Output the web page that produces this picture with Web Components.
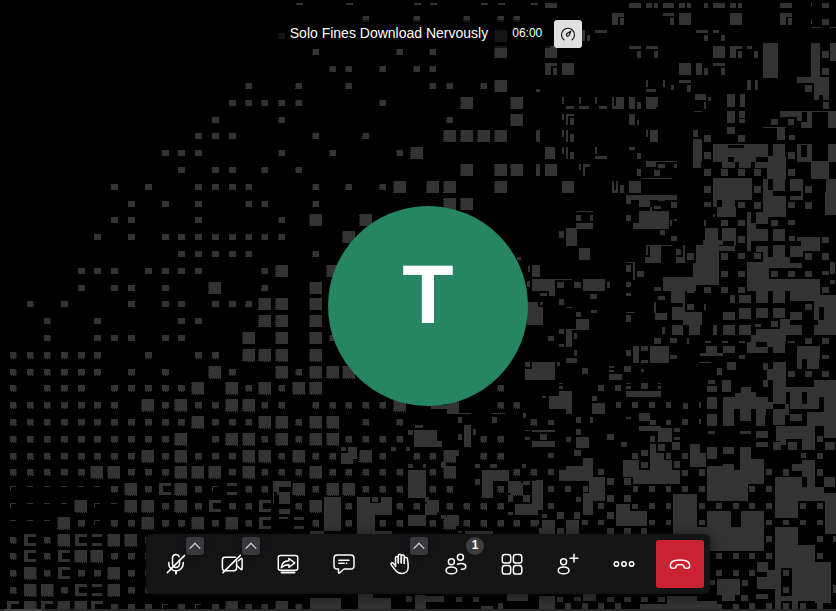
<!DOCTYPE html>
<html lang="en">
<head>
<meta charset="utf-8">
<meta name="viewport" content="width=device-width, initial-scale=1">
<title>Solo Fines Download Nervously</title>
<style>
  html, body {
    height: 100%;
    margin: 0;
    background: #000;
    font-family: "Liberation Sans", Arial, sans-serif;
  }
</style>
</head>
<body>
<meeting-room>
  <pixel-backdrop slot="backdrop"></pixel-backdrop>
  <meeting-subject slot="subject" time="06:00">Solo Fines Download Nervously</meeting-subject>
  <user-avatar slot="speaker" color="#268663">T</user-avatar>
  <meeting-toolbar slot="toolbar">
    <toolbar-button icon="mic" label="Unmute microphone" menu="Audio settings"></toolbar-button>
    <toolbar-button icon="camera" label="Start camera" menu="Video settings"></toolbar-button>
    <toolbar-button icon="share" label="Share your screen"></toolbar-button>
    <toolbar-button icon="chat" label="Open chat"></toolbar-button>
    <toolbar-button icon="hand" label="Raise your hand" menu="Reactions"></toolbar-button>
    <toolbar-button icon="people" label="Participants">1</toolbar-button>
    <toolbar-button icon="tiles" label="Toggle tile view"></toolbar-button>
    <toolbar-button icon="invite" label="Invite people"></toolbar-button>
    <toolbar-button icon="more" label="More actions"></toolbar-button>
    <toolbar-button icon="hangup" label="Leave the meeting" danger></toolbar-button>
  </meeting-toolbar>
</meeting-room>

<template id="room-template">
  <style>
    :host {
      display: block;
      position: relative;
      min-height: 100%;
      overflow: hidden;
      background: #000;
    }
    .backdrop {
      position: absolute;
      inset: 0;
    }
    .stage {
      position: relative;
      box-sizing: border-box;
      min-height: 100vh;
      display: grid;
      grid-template-rows: 1fr auto 1fr;
      justify-items: center;
      padding: 17px 0 17px 20px;
    }
    .top {
      align-self: start;
      padding-top: 3px;
    }
    .bottom { align-self: end; }
    .strip {
      position: absolute;
      left: 0;
      right: 0;
      bottom: 0;
      height: 2px;
      background: linear-gradient(90deg, #292929 4px, #444 4px 42px, #292929 42px);
    }
  </style>
  <div class="backdrop"><slot name="backdrop"></slot></div>
  <main class="stage">
    <div class="top"><slot name="subject"></slot></div>
    <slot name="speaker"></slot>
    <div class="bottom"><slot name="toolbar"></slot></div>
  </main>
  <div class="strip"></div>
</template>

<template id="subject-template">
  <style>
    :host {
      display: flex;
      align-items: center;
      height: 28px;
      color: #fff;
    }
    .title, .timer {
      box-sizing: border-box;
      height: 28px;
      background: rgba(0, 0, 0, 0.6);
    }
    .title {
      margin: 0;
      padding: 0 16px;
      font-size: 14px;
      font-weight: 400;
      line-height: 26px;
      border-radius: 3px 0 0 3px;
      white-space: nowrap;
    }
    .timer {
      padding: 0 8px;
      margin-right: 4px;
      font-size: 12px;
      line-height: 26px;
    }
    button {
      display: flex;
      align-items: center;
      justify-content: center;
      width: 28px;
      height: 28px;
      padding: 0;
      border: 0;
      border-radius: 3px;
      background: #e0e0e0;
      color: #111;
      cursor: pointer;
    }
    svg {
      width: 16px;
      height: 16px;
    }
  </style>
  <h1 class="title"><slot></slot></h1>
  <time class="timer"></time>
  <button type="button" aria-label="Performance settings">
    <svg viewBox="0 0 16 16" fill="none" stroke="currentColor" stroke-width="1.2" stroke-linecap="round">
      <path d="M3.9 13.8A6.5 6.5 0 1 1 12.1 13.8"/>
      <path d="M10.9 5.3 7 7.6a1.4 1.4 0 1 0 2 1.9z" stroke-linejoin="round"/>
    </svg>
  </button>
</template>

<template id="avatar-template">
  <style>
    :host {
      display: flex;
      align-items: center;
      justify-content: center;
      box-sizing: border-box;
      width: 200px;
      height: 200px;
      padding-bottom: 24px;
      border-radius: 50%;
      color: #fff;
      font-size: 84px;
      font-weight: 700;
      line-height: 96px;
    }
  </style>
  <slot></slot>
</template>

<template id="toolbar-template">
  <style>
    :host {
      display: flex;
      gap: 8px;
      padding: 6px;
      border-radius: 6px;
      background: #141414;
      box-shadow: 0 2px 8px 4px rgba(0, 0, 0, 0.3);
    }
  </style>
  <slot></slot>
</template>

<template id="button-template">
  <style>
    :host {
      display: block;
      position: relative;
    }
    button {
      display: flex;
      align-items: center;
      justify-content: center;
      padding: 0;
      border: 0;
      border-radius: 3px;
      background: transparent;
      color: #fff;
      cursor: pointer;
    }
    .main {
      width: 48px;
      height: 48px;
    }
    .main:hover { background: #292929; }
    :host([danger]) .main { background: #cb2233; }
    .main svg {
      width: 24px;
      height: 24px;
    }
    .menu, .badge {
      position: absolute;
      top: -3px;
      right: -4px;
      width: 18px;
      height: 18px;
    }
    .menu {
      background: #36383c;
      box-shadow: 0 1px 4px rgba(0, 0, 0, 0.4);
    }
    .menu svg {
      width: 12px;
      height: 12px;
    }
    .badge {
      border-radius: 50%;
      background: #3d3d3d;
      color: #fff;
      font-size: 12px;
      font-weight: 700;
      line-height: 17px;
      text-align: center;
      pointer-events: none;
    }
    [hidden] { display: none; }
  </style>
  <button class="main" type="button">
    <svg viewBox="0 0 24 24" fill="none" stroke="currentColor" stroke-width="1.5" stroke-linecap="round" stroke-linejoin="round"></svg>
  </button>
  <button class="menu" type="button" hidden>
    <svg viewBox="0 0 12 12" fill="none" stroke="#c8c8c8" stroke-width="1.3"><path d="M.7 8.7 6 3.3l5.3 5.4"/></svg>
  </button>
  <span class="badge" hidden><slot></slot></span>
</template>

<script>
const ICONS = {
  mic: `<path d="M15.5 8v4a3.5 3.500 0 0 1-7 0V6a3.500 3.500 0 0 1 6.700-1.400"/>
    <path d="M4.800 10.500v1.200a7.200 7.200 0 0 0 14.400 0v-1.200"/><path d="M12 19v2.600" stroke-width="2"/>
    <path d="M3.400 20.600 20.600 3.400"/>`,
  camera: `<path d="M15.500 5.300H5a2.600 2.600 0 0 0-2.600 2.600v8.200A2.600 2.600 0 0 0 5 18.700h9a2.600 2.600 0 0 0 2.600-2.600V9"/>
    <path d="m16.600 13.500 4.400 3.900c.5.400 1.100.200 1.100-.5V7c0-.7-.6-.9-1.100-.5l-2.600 2.200"/><path d="M3 20.600 20.300 3.400"/>`,
  share: `<rect x="2.300" y="3.600" width="19.400" height="14.700" rx="2"/>
    <path d="M5.500 20.600h13" stroke-width="2"/>
    <path d="M5.300 15.800c.3-4.200 3-6.900 7.600-7V6.500l5.900 4.400-5.900 4.400v-2.600c-3.400-.1-5.500.8-7.600 3.100z"/>`,
  chat: `<path d="M5.300 3h13.400A3.300 3.300 0 0 1 22 6.300v7.400a3.300 3.300 0 0 1-3.300 3.300H12l-4.500 4c-.5.4-1 .2-1-.5V17H5.300A3.300 3.300 0 0 1 2 13.700V6.300A3.300 3.300 0 0 1 5.300 3z"/>
    <path d="M6.800 8.200H17M6.800 11.300h5.400M14.300 11.300h.5"/>`,
  hand: `<path d="M7.500 14.500V5.800a1.400 1.400 0 0 1 2.800 0V11"/>
    <path d="M10.300 11V3.800a1.500 1.500 0 0 1 3 0V11"/>
    <path d="M13.300 11V4.600a1.500 1.500 0 0 1 3 0v6.900"/>
    <path d="M16.300 11.500V6.800a1.500 1.500 0 0 1 3-.1c.5 2.300.9 5.300.9 8.300 0 4-2.700 6.500-6.500 6.500-2.900 0-4.800-1.200-6.200-3.100l-4.300-5.600c-.9-1.200.8-2.700 2-1.600l2.300 2.300"/>`,
  people: `<circle cx="7.400" cy="9.700" r="3"/><ellipse cx="7.400" cy="18.400" rx="5.400" ry="3.400"/>
    <circle cx="16.400" cy="5.300" r="3"/><path d="M13.500 12.200c3.700-1.500 8.300-.3 8.300 2.200 0 1.700-1.800 2.800-4.300 2.900"/>`,
  tiles: `<rect x="2.300" y="2.600" width="8.400" height="8.400" rx="2.600"/><rect x="13.400" y="2.600" width="8.400" height="8.400" rx="2.600"/>
    <rect x="2.300" y="13.600" width="8.400" height="8.400" rx="2.600"/><rect x="13.400" y="13.600" width="8.400" height="8.400" rx="2.600"/>`,
  invite: `<circle cx="7.600" cy="9.700" r="3"/><ellipse cx="7.600" cy="18.400" rx="5.400" ry="3.400"/>
    <path d="M18 2.300v7.800M14.100 6.200h7.800"/>`,
  more: `<circle cx="4.400" cy="12" r="2.200"/><circle cx="12" cy="12" r="2.200"/><circle cx="19.600" cy="12" r="2.200"/>`,
  hangup: `<path d="M2.300 13.400C2.300 9.700 6.300 8 12 8s9.700 1.700 9.700 5.400c0 1.700-.6 2.900-2 2.800l-2.600-.3c-1.200-.2-1.400-1-1.500-2.500-1.100-.6-2.200-.8-3.600-.8s-2.500.2-3.600.8c-.1 1.500-.3 2.300-1.500 2.500l-2.600.3c-1.400.1-2-1.100-2-2.800z"/>`,
};

// One character per cell, 16.8px pitch. s: dot, B: block, h: cut-off dot,
// t: dash, l: corner, C: bracket, e: two bars.
const CELLS = [
  '.................h..h...hh..hh.h',
  '.....................s..s..s.ss.',
  '................s............B..',
  '..................s....s.s...B..',
  '...................ss.s.ss......',
  '..............s..s..s....ss.sB..',
  '.............sssss....s....B..B.',
  '............s...s.........s...B.',
  '...........sss....s..s....BBBB..',
  '.........sss....s..s...sB.......',
  '..........s.ss.s.s.........B.BB.',
  '......s.s..ssss...s.s.sB.BB..B..',
  '.......s.s.s..ss..s.......BB....',
  '......ss...s....s.B..B..........',
  '.....s.s.ssssssss...B...........',
  '..........sssss...s.............',
  '....sss.ssss...sB..B............',
  '....s.ss.s..B..s..B.............',
  '.s.s...s.ss.sssBB.B.............',
  '..s..s....ss...BB.B.............',
  '..s..sss.ss...B.B.Bs............',
  'ssssss..s..ss.BBB.B.............',
  'ssssss.s.s..Bs..BsBBB...........',
  's.sss.sssssB.BsBsBB..........s..',
  'sssssss.BsBssBBss.sssssB.....ss.',
  'sssssssssssBsssBBsBB.s.s.......s',
  'ssssssssssB.sBBsBsBBssss....ss..',
  'ssssssssBsBsssBBsBss.Bs.ssB.ss..',
  'sssssBBsssBBBsBsssBsssss.sB...ss',
  'ltttttsBsCBslesseBsBBsss.ss..sB.',
  'ltttBltBBsBsCssC.sB.s..ssBssss..',
  'tttBslssBssBsBsC.es.s.ss.sBsssss',
  'sCsBCeBBs.......................',
  'sCsCBBsss.......................',
  'sBsCssBss.......................',
  'sBBsCeBss.......................',
  'CBCBBCssslslsBssBssB..s.........',
];

const SHAPES = {
  s: '-9 -9 9 9', B: '-18 -18 18 18', h: '-9 3 12 9', t: '-9 -8 9 -5',
  l: '-9 -9 9 -6 -9 -9 -6 6', C: '-18 -18 18 -9 -18 -9 -6 9 -18 9 18 18',
  e: '-14 -18 14 -8 -14 8 14 18',
};

// Merged areas. Each list is x0 y0 x1 y1 in thirds of a pixel from its origin.
const AREAS = [
  [536, 0, `27 10 63 23 279 10 315 23 330 10 348 23 354 10 366 23 381 10 414 23 429 10 447 23 453 10 465 23 504 10 516 23
    531 10 567 23 582 10 600 23 606 10 618 23 732 10 768 23 825 10 828 20 858 10 879 23
    228 39 264 50 228 50 246 75 252 55 264 75 381 39 414 48 402 55 414 75 429 39 465 75 582 39 618 75 732 39 768 50
    732 50 750 75 756 55 768 75 825 57 828 72 858 57 879 75 827 81 852 84 878 81 900 84
    138 90 147 122 153 105 162 122 177 90 213 99 480 90 516 99 504 105 516 122 531 90 549 99 555 105 567 122
    27 138 63 174 279 138 315 147 303 152 315 174 330 138 366 147 354 152 366 174 531 138 567 174 582 138 618 147
    582 147 600 174 606 152 618 174 633 138 648 147 654 152 666 174 681 129 726 234 825 129 852 234 882 129 900 183 858 152 879 174
    27 189 63 198 27 198 45 225 51 204 63 225 78 189 114 225 429 189 465 225 480 189 498 225 504 204 516 225
    531 189 567 198 555 204 567 225 858 204 879 225 783 231 879 249 834 249 879 285 834 285 849 300 861 285 879 300 861 306 879 327
    807 255 828 276 0 267 12 276 330 240 336 261 330 267 360 276 381 240 387 261 405 255 414 270 429 240 465 249
    453 255 465 276 633 240 645 270 657 240 666 270 78 291 84 312 90 318 114 327 129 291 135 312 129 318 159 327
    177 291 183 312 189 318 213 327 228 291 234 318 240 291 264 327 228 318 240 327 279 291 297 327 303 306 315 327
    330 291 366 321 330 321 360 327 477 282 510 300 504 306 510 327 516 291 525 303 573 282 597 321 612 282 627 321
    78 342 84 360 90 342 114 348 90 348 97 375 102 354 114 375 279 342 297 375 303 360 309 375 573 333 597 369
    609 333 627 353 609 357 627 369 704 357 725 375 732 333 798 351 783 351 798 363 813 333 828 384 795 366 813 384
    798 333 900 336 756 357 775 375 876 336 900 384 474 333 498 336 0 390 12 426 78 390 84 411 90 390 96 426 102 402 114 426
    330 390 336 411 342 390 366 426 471 390 486 411 504 405 525 426 573 381 597 402 606 405 627 426 681 381 750 384
    723 384 747 420 759 405 777 420 27 441 57 477 78 441 84 462 90 441 96 477 102 456 114 477 177 441 183 462 177 468 213 477
    279 441 297 450 303 459 315 477 471 417 498 486 504 456 525 477 530 432 576 486 576 444 696 471 594 471 660 486
    624 432 696 444 576 432 624 435 696 468 750 534 711 432 747 468 756 456 777 477 783 432 795 486 795 470 828 486 813 432 828 470
    795 432 813 436 876 432 900 486 0 492 12 528 27 492 63 528 129 492 135 510 141 492 162 500 141 500 147 528 303 507 315 528
    330 486 360 501 366 492 387 503 354 510 373 528 327 483 423 486 414 492 423 503 471 486 495 503 504 507 525 528
    558 486 597 503 609 486 645 503 657 486 693 503 555 507 575 528 606 507 627 528 654 507 675 528 693 486 750 537
    756 507 777 528 825 483 879 537 78 543 114 579 228 543 234 575 240 543 246 579 252 555 264 579 279 543 315 579
    504 558 525 579 531 534 648 600 654 558 675 579 681 537 696 600 711 537 747 573 696 573 711 600 762 537 801 573
    795 555 801 600 807 558 828 579 870 537 900 600 321 534 408 537 270 585 423 588 270 588 310 600 342 588 408 600`],
  [536, 190, `78 0 114 9 228 0 246 9 252 0 264 9 279 0 315 9 504 0 525 9 270 15 408 19 270 27 285 42 309 19 342 51
    366 24 387 33 354 48 375 57 405 18 423 30 405 36 423 54 531 0 648 18 531 18 543 50 558 18 597 50 609 18 648 30 543 50 600 81
    504 36 525 52 606 36 627 54 654 36 675 57 681 0 711 66 711 18 750 81 762 18 798 30 795 0 801 18 756 36 777 54
    807 36 828 57 867 6 900 75 120 63 171 67 120 75 135 93 162 75 171 93 120 99 171 117 90 114 123 168 69 123 84 144
    129 174 162 210 270 75 285 93 309 63 399 117 291 99 309 117 342 51 348 63 402 90 408 108 413 87 423 92 531 72 537 81
    555 90 575 108 606 90 627 108 504 90 510 108 633 66 645 183 645 99 660 153 660 66 696 102 660 117 696 153
    705 90 725 108 756 90 777 105 696 66 750 81 372 120 387 135 405 138 423 153 507 114 546 165 501 150 561 165
    558 114 600 153 594 153 600 168 606 138 627 159 711 117 747 153 759 138 777 153 783 141 798 153 795 141 852 183
    858 141 879 159 762 168 801 201 660 168 696 186 711 165 747 201 330 165 408 168 330 168 336 195 342 168 375 219
    327 201 342 219 420 177 435 195 441 165 447 216 420 201 447 219 453 189 474 210 480 165 549 285 471 219 480 261
    549 168 597 183 555 189 575 210 606 189 627 208 654 189 675 208 681 186 696 216 696 201 762 219 807 189 828 210
    858 189 879 210 270 216 297 220 270 225 285 246 291 216 297 270 303 243 324 261 0 225 12 261 381 261 480 303
    405 303 447 339 555 243 575 261 606 243 627 261 633 216 699 303 699 219 798 234 705 243 725 261 756 243 777 261
    807 243 828 261 858 243 879 255 882 216 897 252 882 270 897 282 699 267 852 303 0 267 57 303 39 303 57 318
    57 267 108 270 63 276 84 294 114 276 135 294 141 267 207 303 213 276 222 294 270 276 285 291 354 291 375 303
    453 291 474 309 504 291 525 309 555 291 575 309 606 291 627 309 858 291 879 309 12 309 33 318 69 327 84 345
    162 312 183 327 270 309 285 318 366 318 387 330 582 315 597 339 609 315 645 339 660 303 696 339 711 303 747 339
    762 303 834 333 834 303 852 315 834 315 900 351 0 351 21 405 0 336 6 351 12 336 21 345 90 351 108 354 120 366 135 381
    165 360 183 369 120 387 159 420 270 366 297 370 270 375 285 396 354 336 360 369 357 369 393 390 453 342 474 360
    504 342 510 360 408 351 441 390 441 366 498 405 441 339 447 366 561 366 597 390 609 354 645 387 660 354 696 384
    711 354 747 384 762 366 798 390 807 342 828 360 834 351 849 390 864 351 900 435 846 390 864 405 834 405 864 435
    408 405 441 435 459 405 492 435 531 405 543 435 561 405 597 435 609 405 645 435 657 402 675 411 705 393 725 411
    732 387 762 417 762 405 798 417 660 417 798 435 645 435 750 456 36 438 54 453 69 417 84 432 90 417 108 471 108 417 123 420
    114 429 123 447 69 462 84 471 354 444 375 462 402 444 423 459 453 444 459 462 378 411 387 432 507 453 525 460
    558 453 575 460 609 453 627 460 633 456 660 489 660 471 696 489 693 456 747 471 711 471 747 489 756 453 777 460
    807 444 828 462 858 444 879 462 270 480 285 498 291 468 309 519 315 468 336 482 342 468 399 519 402 495 423 507
    510 468 543 489 561 468 597 489 492 489 561 498 609 495 627 508 783 468 852 507 783 507 798 537 813 507 849 537
    858 495 879 508 90 504 123 519 114 480 123 498 0 516 57 570 63 516 72 528 138 534 156 552 219 528 234 533
    219 540 234 546 219 552 258 570 264 528 285 546 315 510 336 519 315 537 324 546 489 516 525 520 543 534 558 555
    573 516 600 540 681 519 696 540 711 516 750 570 693 537 711 570 756 543 777 561 807 543 828 561 858 543 879 561`],
  [536, 380, `69 9 82 13 69 18 82 27 186 15 204 33 237 15 255 33 270 9 285 12 270 18 285 27 366 9 375 12 366 18 375 27
    270 33 375 51 315 9 336 27 39 48 108 87 69 33 108 48 90 87 108 102 168 48 183 63 168 69 207 102
    240 66 255 84 288 66 306 84 339 66 357 84 390 66 405 84 441 69 456 87 489 66 495 84 516 0 537 12 513 18 543 36
    558 0 585 36 513 51 543 87 561 51 696 87 615 21 645 51 597 39 615 51 645 36 660 51 612 87 645 123 660 87 690 105 660 105 687 138
    693 66 711 87 681 0 696 21 693 0 711 0 711 0 750 72 750 21 846 36 762 36 798 72 813 36 834 51 834 0 900 51 864 51 900 150
    813 51 849 87 711 87 747 135 747 72 760 105 762 102 798 123 762 72 813 87 813 95 864 138 747 138 837 177
    720 138 747 183 864 150 900 174 798 177 837 210 36 120 54 135 120 111 135 129 162 111 171 129 270 111 285 117
    309 99 342 123 342 120 360 135 309 138 375 153 366 144 408 186 390 120 405 135 438 117 456 135 489 117 495 132
    513 102 543 138 561 87 594 138 612 153 645 162 516 153 537 162 660 153 696 174 0 150 57 156 12 162 33 180
    0 183 57 201 90 171 105 186 120 171 159 204 120 147 135 165 213 162 234 180 342 168 357 186 366 192 387 213
    408 186 432 210 414 144 432 156 414 171 432 180 255 186 273 201 462 192 492 261 492 219 510 261 513 201 543 237
    561 201 594 221 612 201 645 270 660 186 696 201 711 186 735 210 735 174 750 195 756 186 783 210 843 168 861 186
    867 186 897 210 36 219 54 234 114 210 135 228 186 267 204 285 288 219 306 237 315 210 336 228 342 192 360 270
    360 219 384 270 390 219 405 237 438 219 456 237 795 219 810 234 843 219 861 237 141 234 171 303 69 270 141 303
    90 258 141 270 261 240 309 291 291 270 432 312 315 246 336 264 384 240 408 270 414 243 432 264 489 267 507 288
    513 258 594 363 561 252 594 258 594 270 684 312 594 312 636 363 645 237 684 270 438 270 456 288 36 267 54 285
    0 267 4 285 690 267 708 285 741 267 759 288 768 252 798 273 798 240 837 291 843 267 861 288 0 300 21 390
    36 318 54 336 87 318 105 336 159 291 207 363 141 318 156 336 141 339 171 405 213 294 234 315 264 294 285 315
    291 318 306 336 339 318 357 336 390 318 405 336 438 318 456 336 489 318 507 336 639 318 657 336 690 318 708 336
    717 291 798 363 717 363 786 414 798 321 864 363 813 291 837 321 864 291 897 321 867 339 900 462 864 339 870 363
    36 369 54 387 120 351 135 366 186 369 204 387 213 345 234 366 264 345 285 366 240 372 282 438 282 393 333 438
    288 372 306 387 339 369 357 387 390 369 405 387 411 343 483 462 489 369 507 387 540 369 558 387 591 369 609 387
    639 369 657 387 690 369 708 387 792 369 810 387 843 369 861 387 63 396 84 417 114 396 132 417 18 402 33 415
    213 396 234 417 18 420 57 462 90 420 129 462 138 420 156 435 186 420 204 435 339 420 357 435 390 420 405 435
    0 420 9 435 489 420 507 435 513 394 585 513 615 394 684 513 585 441 615 513 483 441 513 513 690 420 708 435
    741 420 759 435 792 420 810 435 843 420 861 435 63 444 84 462 213 444 234 462 264 444 285 462 315 444 333 462
    690 468 708 486 717 441 786 564 717 564 735 687 735 648 786 663 768 564 786 687 786 495 837 663 837 546 886 669 741 669 759 687
    792 669 810 687 741 570 759 588 741 621 759 639 843 468 861 486 891 468 900 486
    540 519 558 537 591 519 609 537 639 519 657 537 690 519 708 537 843 519 861 537 540 570 558 588 591 570 609 588
    639 570 657 588 663 546 696 576 693 570 720 627 663 591 717 627 543 597 612 645 618 600 636 618 522 600 537 615
    63 651 81 666 114 651 135 663 141 642 180 663 213 651 234 666 264 651 285 666 315 651 336 666 366 651 387 666
    393 648 483 687 312 672 393 687 9 648 57 687 87 669 105 687 138 669 156 687 186 669 204 687 237 669 255 687
    483 663 543 687 558 645 597 663 615 645 636 663 540 672 558 687 591 672 609 687 639 669 657 687 660 642 696 657
    690 669 708 687 891 615 900 640 843 669 861 687`],
  [270, 380, `433 150 500 183 433 183 516 201 583 135 603 201 414 150 429 165 565 111 577 129 565 162 577 180 609 147 618 165
    530 66 567 102 483 75 530 87 666 99 705 103 666 111 680 129 567 99 602 103 759 99 768 114 816 48 828 54 435 135 459 143
    786 150 840 156 810 162 828 180 786 183 840 201 765 150 780 154 765 171 780 180 213 219 249 252 234 201 262 237
    213 201 228 213 363 201 378 213 408 201 420 213 414 252 429 264 459 252 468 264 558 210 567 228 513 246 528 264
    615 252 629 264 660 252 680 264 756 252 768 264 414 270 467 353 636 270 717 303 636 303 669 353 714 303 753 339
    786 303 819 390 735 372 804 405 465 372 501 405 615 297 629 315 465 351 477 366 714 345 728 366 759 345 779 366
    759 303 779 315 9 303 63 321 9 321 27 336 27 336 60 372 9 339 12 369 27 387 60 402 27 411 54 418 163 352 214 452
    262 352 300 460 300 370 365 404 306 352 325 366 333 352 365 370 300 404 314 452 414 404 467 438 532 404 567 438
    513 404 527 417 714 396 728 404 807 444 840 462 585 452 669 462 120 452 162 462 262 452 365 462 816 420 840 444 565 452 577 460`],
  [265, 195, `801 210 825 246 801 252 840 288 786 258 795 276 786 321 819 390 819 336 834 390 780 501 795 516 801 501 840 555
    780 522 801 555 756 186 768 195 789 213 795 231 825 321 834 330`],
  [310, 525, `0 219 92 252 145 207 190 252 190 219 243 252 288 213 306 231 315 210 348 252 348 213 402 231 438 216 456 231
    489 216 507 231 513 242 548 252 564 235 580 252 590 207 655 227`],
];

function block(ox, oy, list) {
  const n = list.trim().split(/\s+/).map(Number);
  let d = '';
  for (let i = 0; i < n.length; i += 4) {
    d += `M${ox + n[i]} ${oy + n[i + 1]}H${ox + n[i + 2]}V${oy + n[i + 3]}H${ox + n[i]}z`;
  }
  return d;
}

// Pixel-stepped backdrop, drawn on a grid of three units per pixel.
class PixelBackdrop extends HTMLElement {
  connectedCallback() {
    let solid = '';
    let teeth = '';
    CELLS.forEach((row, r) => {
      [...row].forEach((kind, c) => {
        if (kind === '.') return;
        const x = Math.round(13.3 + c * 16.8) * 3;
        const y = Math.round(2 + r * 16.8) * 3;
        const wide = kind === 's' && c > 2 && c < 14;
        solid += block(x, y, wide ? '-9 -9 12 9' : SHAPES[kind]);
        const half = kind === 's' ? 9 : kind === 'B' ? 18 : 0;
        if (!half || wide && r < 21) return;
        // notched edges, one pixel deep
        const side = c < 3 ? x + half + 1.5 : x - half - 1.5;
        if (!wide) teeth += `M${side} ${y - half + 3}V${y + half}`;
        if (r > 20) teeth += `M${x - half + 3} ${y + half + 1.5}H${x + half}`;
      });
    });
    AREAS.forEach(([x, y, list]) => {
      solid += block(x * 3, y * 3, list);
    });

    const shadow = this.shadowRoot || this.attachShadow({ mode: 'open' });
    shadow.innerHTML = `
      <style>
        :host { display: block; height: 100%; }
        svg { display: block; width: 100%; height: 100%; }
      </style>
      <svg viewBox="0 0 2508 1833" preserveAspectRatio="xMidYMid slice" shape-rendering="crispEdges" aria-hidden="true">
        <path fill="#333" d="${solid}"/>
        <path fill="none" stroke="#333" stroke-width="3" stroke-dasharray="3" d="${teeth}"/>
      </svg>`;
  }
}

class TemplateElement extends HTMLElement {
  constructor() {
    super();
    const template = document.getElementById(this.constructor.template);
    this.attachShadow({ mode: 'open' }).appendChild(template.content.cloneNode(true));
  }
}

class MeetingRoom extends TemplateElement {
  static template = 'room-template';
}

class MeetingSubject extends TemplateElement {
  static template = 'subject-template';

  connectedCallback() {
    this.shadowRoot.querySelector('.timer').textContent = this.getAttribute('time');
  }
}

class UserAvatar extends TemplateElement {
  static template = 'avatar-template';

  connectedCallback() {
    this.style.backgroundColor = this.getAttribute('color');
  }
}

class MeetingToolbar extends TemplateElement {
  static template = 'toolbar-template';

  connectedCallback() {
    this.setAttribute('role', 'toolbar');
  }
}

class ToolbarButton extends TemplateElement {
  static template = 'button-template';

  connectedCallback() {
    const main = this.shadowRoot.querySelector('.main');
    const menu = this.shadowRoot.querySelector('.menu');
    const badge = this.shadowRoot.querySelector('.badge');

    main.setAttribute('aria-label', this.getAttribute('label'));
    main.querySelector('svg').innerHTML = ICONS[this.getAttribute('icon')];

    if (this.hasAttribute('menu')) {
      menu.hidden = false;
      menu.setAttribute('aria-label', this.getAttribute('menu'));
    }
    badge.hidden = !this.textContent.trim();
  }
}

customElements.define('pixel-backdrop', PixelBackdrop);
customElements.define('meeting-room', MeetingRoom);
customElements.define('meeting-subject', MeetingSubject);
customElements.define('user-avatar', UserAvatar);
customElements.define('meeting-toolbar', MeetingToolbar);
customElements.define('toolbar-button', ToolbarButton);
</script>
</body>
</html>
